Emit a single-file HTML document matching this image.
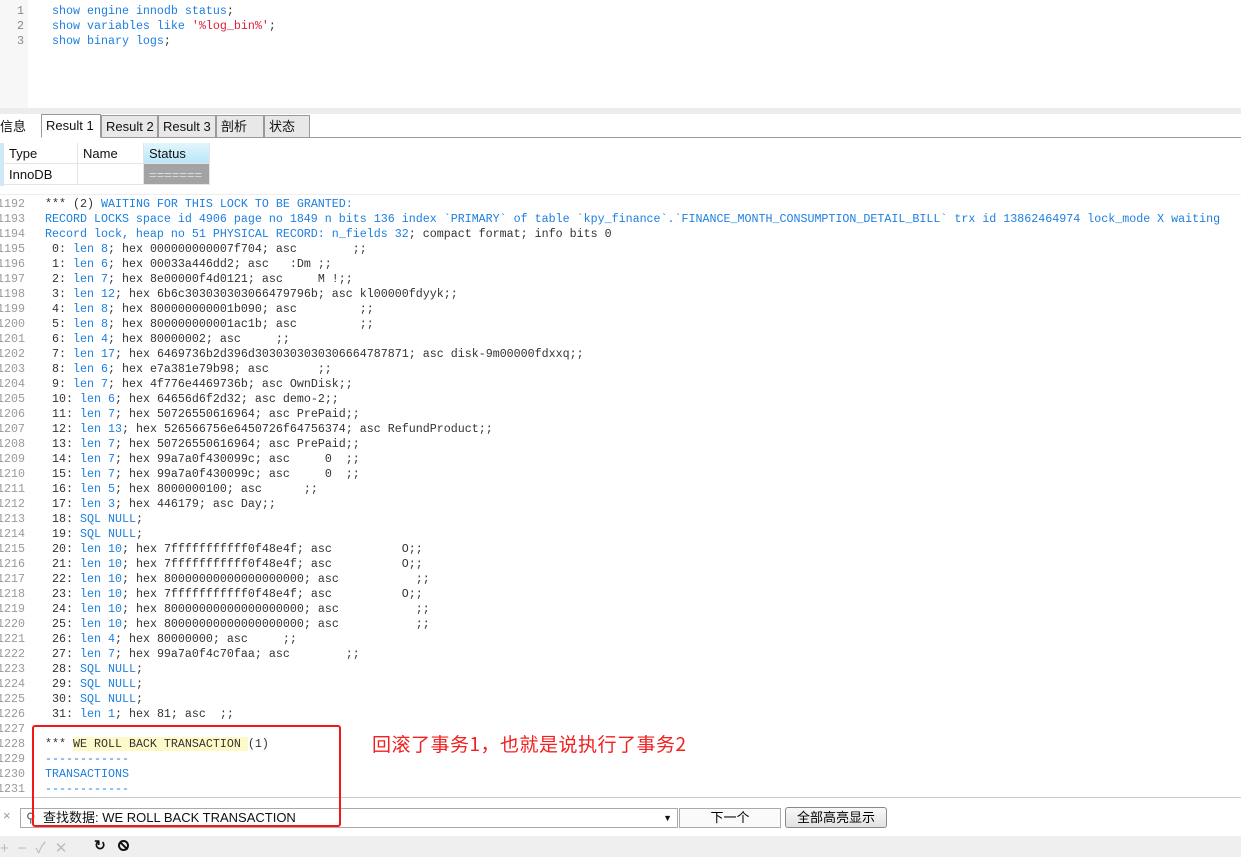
<!DOCTYPE html>
<html><head><meta charset="utf-8"><style>
*{margin:0;padding:0;box-sizing:border-box}
body{width:1241px;height:857px;overflow:hidden;background:#fff;position:relative;font-family:"Liberation Sans","Noto Sans CJK SC",sans-serif}
.mono{font-family:"Liberation Mono","DejaVu Sans Mono",monospace;font-size:11.67px;white-space:pre}
#ed{position:absolute;left:0;top:0;width:1241px;height:108px;background:#fff}
#edg{position:absolute;left:0;top:0;width:28px;height:108px;background:#f7f7f7}
.el{position:absolute;height:15px;line-height:15px;color:#888}
.tl{position:absolute;left:45px;height:15px;line-height:15px;color:#333}
.mono.b,.b{color:#1e7fe0}.s{color:#e0203a}.d{color:#333}
#sep{position:absolute;left:0;top:108px;width:1241px;height:6px;background:#ececec}
#tabs{position:absolute;left:0;top:114px;width:1241px;height:24px;background:#fff;border-bottom:1px solid #999}
.tab{position:absolute;top:1px;height:23px;border:1px solid #999;background:#e8e8e8;font-size:13px;line-height:22px;padding-left:4px;color:#111}
#grid{position:absolute;left:0;top:138px;width:1241px;height:56px;background:#fff;font-size:13px}
.c{position:absolute;height:21px;line-height:21px;padding-left:5px;border-right:1px solid #e4e4e4;border-bottom:1px solid #e4e4e4;color:#111}
#txt{position:absolute;left:0;top:194px;width:1241px;height:603px;background:#fff;border-top:1px solid #eee}
.ln{position:absolute;left:-7px;width:32px;text-align:right;color:#999;height:15px;line-height:15px}
#find{position:absolute;left:0;top:797px;width:1241px;height:39px;background:#fff;border-top:1px solid #ccc}
#bot{position:absolute;left:0;top:836px;width:1241px;height:21px;background:#efefef}
</style></head><body>
<div id="ed"><div id="edg"></div>
<div class="el mono" style="left:17px;top:4px">1</div>
<div class="el mono" style="left:17px;top:19px">2</div>
<div class="el mono" style="left:17px;top:34px">3</div>
<div class="el mono b" style="left:52px;top:4px">show engine innodb status<span class="d">;</span></div>
<div class="el mono b" style="left:52px;top:19px">show variables like <span class="s">'%log_bin%'</span><span class="d">;</span></div>
<div class="el mono b" style="left:52px;top:34px">show binary logs<span class="d">;</span></div>
</div>
<div id="sep"></div>
<div id="tabs">
<div class="tab" style="left:-4px;width:45px;border:none;background:#fff;top:2px">信息</div>
<div class="tab" style="left:41px;width:60px;background:#fff;border-bottom:1px solid #fff;top:0;height:24px">Result 1</div>
<div class="tab" style="left:101px;width:57px">Result 2</div>
<div class="tab" style="left:158px;width:58px">Result 3</div>
<div class="tab" style="left:216px;width:48px">剖析</div>
<div class="tab" style="left:264px;width:46px">状态</div>
</div>
<div id="grid">
<div style="position:absolute;left:0;top:5px;width:4px;height:43px;background:#cfe9f7"></div>
<div class="c" style="left:4px;top:5px;width:74px">Type</div>
<div class="c" style="left:78px;top:5px;width:66px">Name</div>
<div class="c" style="left:144px;top:5px;width:66px;background:linear-gradient(#e2f6fd,#b9e6f8)">Status</div>
<div class="c" style="left:4px;top:26px;width:74px">InnoDB</div>
<div class="c" style="left:78px;top:26px;width:66px"></div>
<div class="c" style="left:144px;top:26px;width:66px;background:#a3a3a6;color:#ddd">=======</div>
</div>
<div id="txt">
<div class="ln mono" style="top:2px">1192</div><div class="tl mono" style="top:2px">*** (2) <span class="b">WAITING FOR THIS LOCK TO BE GRANTED:</span></div>
<div class="ln mono" style="top:17px">1193</div><div class="tl mono b" style="top:17px">RECORD LOCKS space id 4906 page no 1849 n bits 136 index `PRIMARY` of table `kpy_finance`.`FINANCE_MONTH_CONSUMPTION_DETAIL_BILL` trx id 13862464974 lock_mode X waiting</div>
<div class="ln mono" style="top:32px">1194</div><div class="tl mono" style="top:32px"><span class="b">Record lock, heap no 51 PHYSICAL RECORD: n_fields 32</span>; compact format; info bits 0</div>
<div class="ln mono" style="top:47px">1195</div><div class="tl mono" style="top:47px"> 0: <span class="b">len 8</span>; hex 000000000007f704; asc        ;;</div>
<div class="ln mono" style="top:62px">1196</div><div class="tl mono" style="top:62px"> 1: <span class="b">len 6</span>; hex 00033a446dd2; asc   :Dm ;;</div>
<div class="ln mono" style="top:77px">1197</div><div class="tl mono" style="top:77px"> 2: <span class="b">len 7</span>; hex 8e00000f4d0121; asc     M !;;</div>
<div class="ln mono" style="top:92px">1198</div><div class="tl mono" style="top:92px"> 3: <span class="b">len 12</span>; hex 6b6c303030303066479796b; asc kl00000fdyyk;;</div>
<div class="ln mono" style="top:107px">1199</div><div class="tl mono" style="top:107px"> 4: <span class="b">len 8</span>; hex 800000000001b090; asc         ;;</div>
<div class="ln mono" style="top:122px">1200</div><div class="tl mono" style="top:122px"> 5: <span class="b">len 8</span>; hex 800000000001ac1b; asc         ;;</div>
<div class="ln mono" style="top:137px">1201</div><div class="tl mono" style="top:137px"> 6: <span class="b">len 4</span>; hex 80000002; asc     ;;</div>
<div class="ln mono" style="top:152px">1202</div><div class="tl mono" style="top:152px"> 7: <span class="b">len 17</span>; hex 6469736b2d396d3030303030306664787871; asc disk-9m00000fdxxq;;</div>
<div class="ln mono" style="top:167px">1203</div><div class="tl mono" style="top:167px"> 8: <span class="b">len 6</span>; hex e7a381e79b98; asc       ;;</div>
<div class="ln mono" style="top:182px">1204</div><div class="tl mono" style="top:182px"> 9: <span class="b">len 7</span>; hex 4f776e4469736b; asc OwnDisk;;</div>
<div class="ln mono" style="top:197px">1205</div><div class="tl mono" style="top:197px"> 10: <span class="b">len 6</span>; hex 64656d6f2d32; asc demo-2;;</div>
<div class="ln mono" style="top:212px">1206</div><div class="tl mono" style="top:212px"> 11: <span class="b">len 7</span>; hex 50726550616964; asc PrePaid;;</div>
<div class="ln mono" style="top:227px">1207</div><div class="tl mono" style="top:227px"> 12: <span class="b">len 13</span>; hex 526566756e6450726f64756374; asc RefundProduct;;</div>
<div class="ln mono" style="top:242px">1208</div><div class="tl mono" style="top:242px"> 13: <span class="b">len 7</span>; hex 50726550616964; asc PrePaid;;</div>
<div class="ln mono" style="top:257px">1209</div><div class="tl mono" style="top:257px"> 14: <span class="b">len 7</span>; hex 99a7a0f430099c; asc     0  ;;</div>
<div class="ln mono" style="top:272px">1210</div><div class="tl mono" style="top:272px"> 15: <span class="b">len 7</span>; hex 99a7a0f430099c; asc     0  ;;</div>
<div class="ln mono" style="top:287px">1211</div><div class="tl mono" style="top:287px"> 16: <span class="b">len 5</span>; hex 8000000100; asc      ;;</div>
<div class="ln mono" style="top:302px">1212</div><div class="tl mono" style="top:302px"> 17: <span class="b">len 3</span>; hex 446179; asc Day;;</div>
<div class="ln mono" style="top:317px">1213</div><div class="tl mono" style="top:317px"> 18: <span class="b">SQL NULL</span>;</div>
<div class="ln mono" style="top:332px">1214</div><div class="tl mono" style="top:332px"> 19: <span class="b">SQL NULL</span>;</div>
<div class="ln mono" style="top:347px">1215</div><div class="tl mono" style="top:347px"> 20: <span class="b">len 10</span>; hex 7fffffffffff0f48e4f; asc          O;;</div>
<div class="ln mono" style="top:362px">1216</div><div class="tl mono" style="top:362px"> 21: <span class="b">len 10</span>; hex 7fffffffffff0f48e4f; asc          O;;</div>
<div class="ln mono" style="top:377px">1217</div><div class="tl mono" style="top:377px"> 22: <span class="b">len 10</span>; hex 80000000000000000000; asc           ;;</div>
<div class="ln mono" style="top:392px">1218</div><div class="tl mono" style="top:392px"> 23: <span class="b">len 10</span>; hex 7fffffffffff0f48e4f; asc          O;;</div>
<div class="ln mono" style="top:407px">1219</div><div class="tl mono" style="top:407px"> 24: <span class="b">len 10</span>; hex 80000000000000000000; asc           ;;</div>
<div class="ln mono" style="top:422px">1220</div><div class="tl mono" style="top:422px"> 25: <span class="b">len 10</span>; hex 80000000000000000000; asc           ;;</div>
<div class="ln mono" style="top:437px">1221</div><div class="tl mono" style="top:437px"> 26: <span class="b">len 4</span>; hex 80000000; asc     ;;</div>
<div class="ln mono" style="top:452px">1222</div><div class="tl mono" style="top:452px"> 27: <span class="b">len 7</span>; hex 99a7a0f4c70faa; asc        ;;</div>
<div class="ln mono" style="top:467px">1223</div><div class="tl mono" style="top:467px"> 28: <span class="b">SQL NULL</span>;</div>
<div class="ln mono" style="top:482px">1224</div><div class="tl mono" style="top:482px"> 29: <span class="b">SQL NULL</span>;</div>
<div class="ln mono" style="top:497px">1225</div><div class="tl mono" style="top:497px"> 30: <span class="b">SQL NULL</span>;</div>
<div class="ln mono" style="top:512px">1226</div><div class="tl mono" style="top:512px"> 31: <span class="b">len 1</span>; hex 81; asc  ;;</div>
<div class="ln mono" style="top:527px">1227</div>
<div class="ln mono" style="top:542px">1228</div><div class="tl mono" style="top:542px">*** <span style="background:#fdf9c8">WE ROLL BACK TRANSACTION </span>(1)</div>
<div class="ln mono" style="top:557px">1229</div><div class="tl mono b" style="top:557px">------------</div>
<div class="ln mono" style="top:572px">1230</div><div class="tl mono b" style="top:572px">TRANSACTIONS</div>
<div class="ln mono" style="top:587px">1231</div><div class="tl mono b" style="top:587px">------------</div>
</div>
<div style="position:absolute;left:372px;top:731px;font-size:19px;color:#f02020;font-family:'WenQuanYi Zen Hei','Noto Sans CJK SC',sans-serif;line-height:26px;letter-spacing:0.5px">回滚了事务1，也就是说执行了事务2</div>
<div id="find">
<div style="position:absolute;left:3px;top:10px;color:#999;font-size:13px">×</div>
<div style="position:absolute;left:20px;top:10px;width:658px;height:20px;border:1px solid #aaa;background:#fff;font-size:13px;line-height:18px;padding-left:22px;color:#111">查找数据: WE ROLL BACK TRANSACTION
<span style="position:absolute;left:5px;top:0;color:#555">⚲</span>
<span style="position:absolute;right:5px;top:0;font-size:9px">▼</span></div>
<div style="position:absolute;left:679px;top:10px;width:102px;height:20px;border:1px solid #aaa;background:#fafafa;font-size:13px;line-height:18px;text-align:center">下一个</div>
<div style="position:absolute;left:785px;top:9px;width:102px;height:21px;border:1px solid #888;border-radius:3px;background:linear-gradient(#f8f8f8,#e2e2e2);font-size:13px;line-height:19px;text-align:center">全部高亮显示</div>
</div>
<div id="bot">
<div style="position:absolute;left:0;top:1px;font-size:15px;color:#bbb;letter-spacing:9px">+−✓✕</div>
<div style="position:absolute;left:94px;top:1px;font-size:14px;color:#111;font-weight:bold">↻</div>
<div style="position:absolute;left:118px;top:4px;width:11px;height:11px;border:2px solid #111;border-radius:50%"><div style="position:absolute;left:3px;top:-1px;width:2px;height:10px;background:#111;transform:rotate(-45deg)"></div></div>
</div>
<div style="position:absolute;left:32px;top:725px;width:309px;height:102px;border:2px solid #f01818;border-radius:3px"></div>
</body></html>
